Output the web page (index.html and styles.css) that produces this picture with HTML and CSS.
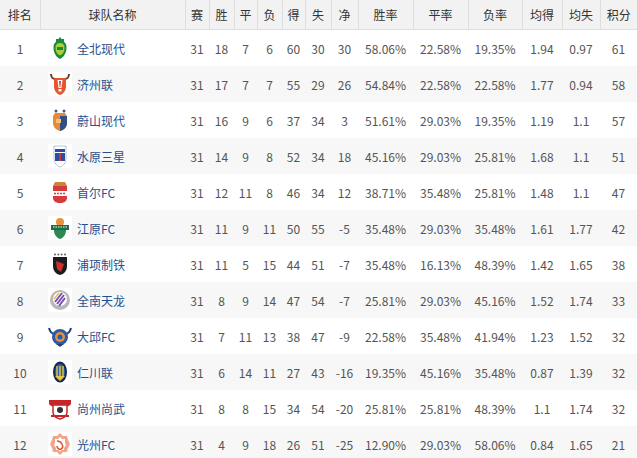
FILE: index.html
```html
<!DOCTYPE html>
<html lang="zh-CN">
<head>
<meta charset="utf-8">
<title>积分榜</title>
<link rel="stylesheet" href="styles.css">
</head>
<body>
<table class="standings">
  <colgroup>
    <col class="w40"><col class="w145"><col class="w24"><col class="w25"><col class="w23"><col class="w25"><col class="w23"><col class="w26"><col class="w27"><col class="w55"><col class="w55"><col class="w54"><col class="w40"><col class="w38"><col class="w37">
  </colgroup>
  <thead>
    <tr><th>排名</th><th>球队名称</th><th>赛</th><th>胜</th><th>平</th><th>负</th><th>得</th><th>失</th><th>净</th><th>胜率</th><th>平率</th><th>负率</th><th>均得</th><th>均失</th><th>积分</th></tr>
  </thead>
  <tbody>
    <tr><td>1</td><td class="team"><span class="logo"><svg viewBox="0 0 24 24"><path d="M12 1l1.5 2H16v3c2 1 2.5 3 2.5 6 0 5-3 9.5-6.5 11-3.5-1.5-6.5-6-6.5-11 0-3 .5-5 2.5-6V3h2.5z" fill="#1b8a3c"/><path d="M12 7c3 0 4.5 1.5 4.5 5 0 4-2 6.5-4.5 7.5-2.5-1-4.5-3.5-4.5-7.5 0-3.5 1.5-5 4.5-5z" fill="#a8cf3a"/><rect x="9" y="11" width="6" height="3" fill="#1b8a3c"/></svg></span><span class="name">全北现代</span></td><td>31</td><td>18</td><td>7</td><td>6</td><td>60</td><td>30</td><td>30</td><td>58.06%</td><td>22.58%</td><td>19.35%</td><td>1.94</td><td>0.97</td><td>61</td></tr>
    <tr><td>2</td><td class="team"><span class="logo"><svg viewBox="0 0 24 24"><path d="M3 2c0 3 2 5 4 5M21 2c0 3-2 5-4 5" stroke="#6b3a2a" stroke-width="2" fill="none"/><path d="M6 6h12v8c0 5-3 8-6 9-3-1-6-4-6-9z" fill="#e4572e"/><path d="M9.5 8h5l-1 8h-3z" fill="#fff"/><rect x="10.5" y="17" width="3" height="2.5" fill="#fff"/><path d="M11 9h2l-.6 6h-.8z" fill="#d63a2a"/></svg></span><span class="name">济州联</span></td><td>31</td><td>17</td><td>7</td><td>7</td><td>55</td><td>29</td><td>26</td><td>54.84%</td><td>22.58%</td><td>22.58%</td><td>1.77</td><td>0.94</td><td>58</td></tr>
    <tr><td>3</td><td class="team"><span class="logo"><svg viewBox="0 0 24 24"><circle cx="8" cy="3" r="1.5" fill="#3d5a8a"/><circle cx="16" cy="3" r="1.5" fill="#3d5a8a"/><path d="M7 5h10l2 3v7c0 4-3 7-7 8-4-1-7-4-7-8V8z" fill="#e8893a"/><path d="M12 8h7v7c0 4-3 7-7 8z" fill="#2f4f86"/><path d="M8 11h5v4H8z" fill="#f4c27a"/></svg></span><span class="name">蔚山现代</span></td><td>31</td><td>16</td><td>9</td><td>6</td><td>37</td><td>34</td><td>3</td><td>51.61%</td><td>29.03%</td><td>19.35%</td><td>1.19</td><td>1.1</td><td>57</td></tr>
    <tr><td>4</td><td class="team"><span class="logo"><svg viewBox="0 0 24 24"><path d="M6 2h12v12c0 5-3 8-6 9-3-1-6-4-6-9z" fill="#fff" stroke="#b9c3d8" stroke-width="1"/><rect x="7" y="5" width="10" height="3" fill="#2a4fa0"/><rect x="7" y="9" width="4" height="8" fill="#2a4fa0"/><rect x="13" y="9" width="4" height="8" fill="#2a4fa0"/><rect x="11" y="9" width="2" height="8" fill="#d8303a"/></svg></span><span class="name">水原三星</span></td><td>31</td><td>14</td><td>9</td><td>8</td><td>52</td><td>34</td><td>18</td><td>45.16%</td><td>29.03%</td><td>25.81%</td><td>1.68</td><td>1.1</td><td>51</td></tr>
    <tr><td>5</td><td class="team"><span class="logo"><svg viewBox="0 0 24 24"><path d="M7 2h10l2 4H5z" fill="#c7863a"/><path d="M5 6h14v12c0 3-3 5-7 5s-7-2-7-5z" fill="#d8393a"/><rect x="5" y="11" width="14" height="5" fill="#fff"/><path d="M6 13.5h12" stroke="#d8393a" stroke-width="1.4" stroke-dasharray="2 1"/></svg></span><span class="name">首尔FC</span></td><td>31</td><td>12</td><td>11</td><td>8</td><td>46</td><td>34</td><td>12</td><td>38.71%</td><td>35.48%</td><td>25.81%</td><td>1.48</td><td>1.1</td><td>47</td></tr>
    <tr><td>6</td><td class="team"><span class="logo"><svg viewBox="0 0 24 24"><circle cx="12" cy="6" r="4" fill="#e8903a"/><path d="M3 9h18v5H3z" fill="#1f6e45"/><path d="M6 14h12c0 5-3 8-6 9-3-1-6-4-6-9z" fill="#2a8a52"/><path d="M5 11h14" stroke="#fff" stroke-width="1" stroke-dasharray="1.5 1"/></svg></span><span class="name">江原FC</span></td><td>31</td><td>11</td><td>9</td><td>11</td><td>50</td><td>55</td><td>-5</td><td>35.48%</td><td>29.03%</td><td>35.48%</td><td>1.61</td><td>1.77</td><td>42</td></tr>
    <tr><td>7</td><td class="team"><span class="logo"><svg viewBox="0 0 24 24"><circle cx="7" cy="2.5" r="1" fill="#666"/><circle cx="10.3" cy="2.5" r="1" fill="#666"/><circle cx="13.6" cy="2.5" r="1" fill="#666"/><circle cx="17" cy="2.5" r="1" fill="#666"/><path d="M5 5h14v9c0 5-3 8-7 9-4-1-7-4-7-9z" fill="#1c1c1c"/><path d="M8 9l8 3-3 8-4-3z" fill="#d0302a"/></svg></span><span class="name">浦项制铁</span></td><td>31</td><td>11</td><td>5</td><td>15</td><td>44</td><td>51</td><td>-7</td><td>35.48%</td><td>16.13%</td><td>48.39%</td><td>1.42</td><td>1.65</td><td>38</td></tr>
    <tr><td>8</td><td class="team"><span class="logo"><svg viewBox="0 0 24 24"><circle cx="12" cy="12" r="10" fill="#b8b8bc"/><circle cx="12" cy="11" r="7" fill="#fff"/><path d="M7 14l7-9M9 16l7-9M11 18l6-8" stroke="#7b4fb0" stroke-width="2"/><path d="M6 11l5-6" stroke="#e8c23a" stroke-width="1.5"/></svg></span><span class="name">全南天龙</span></td><td>31</td><td>8</td><td>9</td><td>14</td><td>47</td><td>54</td><td>-7</td><td>25.81%</td><td>29.03%</td><td>45.16%</td><td>1.52</td><td>1.74</td><td>33</td></tr>
    <tr><td>9</td><td class="team"><span class="logo"><svg viewBox="0 0 24 24"><path d="M1 4c1 4 3 6 6 6M23 4c-1 4-3 6-6 6" stroke="#1f3f7a" stroke-width="2" fill="none"/><circle cx="12" cy="13" r="8" fill="#2b5aa8"/><circle cx="12" cy="13" r="5" fill="#e8903a"/><circle cx="12" cy="13" r="2.5" fill="#2b5aa8"/><path d="M8 20h8l-4 3z" fill="#1f3f7a"/></svg></span><span class="name">大邱FC</span></td><td>31</td><td>7</td><td>11</td><td>13</td><td>38</td><td>47</td><td>-9</td><td>22.58%</td><td>35.48%</td><td>41.94%</td><td>1.23</td><td>1.52</td><td>32</td></tr>
    <tr><td>10</td><td class="team"><span class="logo"><svg viewBox="0 0 24 24"><ellipse cx="12" cy="12" rx="7" ry="10.5" fill="#1a2a4a"/><ellipse cx="12" cy="12" rx="5" ry="8" fill="#2e63b0"/><path d="M9 6v10M12 6v10M15 6v10" stroke="#e8c83a" stroke-width="1.4"/><path d="M7 16h10l-5 5z" fill="#e8c83a"/></svg></span><span class="name">仁川联</span></td><td>31</td><td>6</td><td>14</td><td>11</td><td>27</td><td>43</td><td>-16</td><td>19.35%</td><td>45.16%</td><td>35.48%</td><td>0.87</td><td>1.39</td><td>32</td></tr>
    <tr><td>11</td><td class="team"><span class="logo"><svg viewBox="0 0 24 24"><path d="M1 4h22v4l-2 2H3L1 8z" fill="#c8252a"/><path d="M5 9h14v7c0 4-3 6-7 7-4-1-7-3-7-7z" fill="#fff" stroke="#c8252a" stroke-width="1.5"/><circle cx="12" cy="14" r="3" fill="#333"/><path d="M3 20h18" stroke="#c8252a" stroke-width="2"/></svg></span><span class="name">尚州尚武</span></td><td>31</td><td>8</td><td>8</td><td>15</td><td>34</td><td>54</td><td>-20</td><td>25.81%</td><td>25.81%</td><td>48.39%</td><td>1.1</td><td>1.74</td><td>32</td></tr>
    <tr><td>12</td><td class="team"><span class="logo"><svg viewBox="0 0 24 24"><path d="M12 1l3 3h4l1 4 2 4-2 4-1 4h-4l-3 3-3-3H5l-1-4-2-4 2-4 1-4h4z" fill="#f2a48a"/><path d="M12 5l2 2h3v4l1 2-2 3v2h-3l-1 2-1-2H8v-2l-2-3 1-2V7h3z" fill="#fff"/><path d="M9 9c2 0 4 1 5 3s1 4-1 5c-2 1-4-1-4-3" stroke="#e05a3a" stroke-width="1.6" fill="none"/></svg></span><span class="name">光州FC</span></td><td>31</td><td>4</td><td>9</td><td>18</td><td>26</td><td>51</td><td>-25</td><td>12.90%</td><td>29.03%</td><td>58.06%</td><td>0.84</td><td>1.65</td><td>21</td></tr>
  </tbody>
</table>
</body>
</html>
```
FILE: styles.css
```css
html, body {
  margin: 0;
  padding: 0;
  background: #ffffff;
}
body {
  font-family: "Noto Sans CJK SC", "Microsoft YaHei", sans-serif;
  font-size: 12px;
  color: #555555;
}
.standings {
  width: 637px;
  table-layout: fixed;
  border-collapse: collapse;
}
.w40 { width: 40px; }
.w145 { width: 145px; }
.w24 { width: 24px; }
.w25 { width: 25px; }
.w23 { width: 23px; }
.w26 { width: 26px; }
.w27 { width: 27px; }
.w55 { width: 55px; }
.w54 { width: 54px; }
.w38 { width: 38px; }
.w37 { width: 37px; }
.standings th {
  height: 29px;
  padding: 0;
  background: #f2f2f2;
  font-weight: normal;
  color: #333333;
  border-left: 1px solid #dedede;
  border-bottom: 1px solid #dedede;
  text-align: center;
  white-space: nowrap;
}
.standings th:first-child {
  border-left: none;
}
.standings td {
  height: 36px;
  padding: 0;
  text-align: center;
  white-space: nowrap;
}
.standings tbody tr:nth-child(even) td {
  background: #f7f7f7;
}
.standings td.team {
  text-align: left;
}
.team .logo {
  display: inline-block;
  width: 24px;
  height: 24px;
  margin-left: 8px;
  margin-right: 5px;
  vertical-align: middle;
  background: #ffffff;
}
.team .logo svg {
  display: block;
  width: 24px;
  height: 24px;
}
.team .name {
  vertical-align: middle;
  color: #24508f;
}
```
